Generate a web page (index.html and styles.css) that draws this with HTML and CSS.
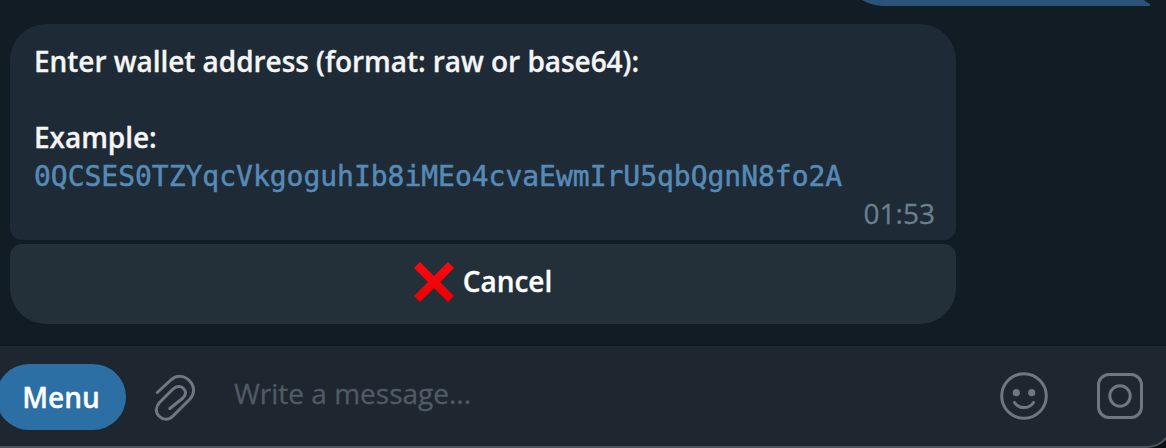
FILE: index.html
```html
<!DOCTYPE html>
<html lang="en">
<head>
<meta charset="utf-8">
<title>Chat</title>
<link rel="stylesheet" href="styles.css">
</head>
<body>
<div class="app">
  <main class="history">
    <svg class="outgoing" width="310" height="6" viewBox="0 0 310 6"><path d="M12 0H294Q296 2 300 4V6H32Q20 5 12 0Z" fill="#2b5379"/></svg>
    <article class="bubble">
      <p class="line"><span class="title">Enter wallet address (format: raw or base64):</span></p>
      <p class="line">&nbsp;</p>
      <p class="line"><span class="example">Example:</span></p>
      <p class="line code">0QCSES0TZYqcVkgoguhIb8iMEo4cvaEwmIrU5qbQgnN8fo2A</p>
      <time class="line time">01:53</time>
    </article>
    <button class="cancel">
      <svg width="40" height="40" viewBox="0 0 40 40"><defs><linearGradient id="red" x1="0" y1="0" x2="0" y2="1"><stop offset="0" stop-color="#ff0710"/><stop offset="1" stop-color="#e90000"/></linearGradient></defs><path d="M6 0L20 14L34 0L40 6L26 20L40 34L34 40L20 26L6 40L0 34L14 20L0 6Z" fill="url(#red)"/></svg>
      <span class="cancel-label">Cancel</span>
    </button>
  </main>
  <footer class="composer">
    <button class="menu"><span>Menu</span></button>
    <svg class="icon clip" width="44" height="50" viewBox="152 371 44 50"><path d="M157.300 392.500L171 379.800C176.500 375 184 375.300 189 380.300C194.800 386 195 393.500 190 399L173.500 415.500C169.500 420 163.500 420.500 159.500 416.500C155 412.500 155.500 407 159.500 402.500L172.500 389.500C176 386 181 385.300 183.500 388.500C186.500 391.500 185.800 395 183 398L169.800 408.500"/></svg>
    <span class="placeholder">Write a message...</span>
    <svg class="icon smile" width="50" height="50" viewBox="0 0 50 50"><circle cx="25" cy="25" r="22.300"/><circle class="eye" cx="17.300" cy="21.700" r="3.600"/><circle class="eye" cx="32.700" cy="21.700" r="3.600"/><path d="M15.500 31.500C20 38.300 30 38.300 34.500 31.500"/></svg>
    <svg class="icon record" width="48" height="48" viewBox="0 0 48 48"><rect x="2.500" y="2.500" width="43" height="43" rx="10.500"/><circle cx="24" cy="24" r="10.200"/></svg>
  </footer>
  <svg class="window-edge" width="1166" height="24" viewBox="0 0 1166 24"><path d="M1166 15C1162 20 1157 22.500 1148 22.500L1148 24H1166Z" fill="#0b0f15"/><path d="M0 23H1146Q1159 23 1167 13" fill="none" stroke="#4b535b" stroke-width="2"/></svg>
</div>
</body>
</html>
```
FILE: styles.css
```css
* { box-sizing: border-box; }
body { margin: 0; background: #121c25; }
.app {
  position: relative;
  display: flex;
  flex-direction: column;
  width: 1166px;
  height: 448px;
  overflow: hidden;
  background: #121c25;
  font: 28px/38px "Open Sans", "Noto Sans", sans-serif;
}
.history {
  display: flex;
  flex-direction: column;
  height: 346px;
  padding-left: 10px;
  border-bottom: 2px solid #0e1920;
}
.outgoing { display: block; flex: none; margin: 0 0 18px 840px; }
.bubble {
  display: flex;
  flex-direction: column;
  flex: none;
  width: 946px;
  height: 216px;
  padding: 18px 21px 0 24px;
  border-radius: 36px 36px 12px 12px;
  background: #1e2a35;
  color: #f5f5f5;
}
.line { height: 38px; margin: 0; white-space: pre; }
.title, .example { font-weight: 600; letter-spacing: -0.045px; -webkit-text-stroke: 0.3px; }
.code {
  padding-top: 2px;
  font-family: "DejaVu Sans Mono", monospace;
  letter-spacing: -0.02px;
  color: #568bb8;
  -webkit-text-stroke: 0.5px;
}
.time { align-self: flex-end; color: #6c7f8f; -webkit-text-stroke: 0.3px; }
button { border: 0; padding: 0; font: inherit; font-weight: 600; color: #fff; -webkit-text-stroke: 0.3px; }
.cancel {
  display: flex;
  align-items: center;
  justify-content: center;
  gap: 9px;
  flex: none;
  width: 946px;
  height: 80px;
  margin-top: 4px;
  padding-bottom: 4px;
  border-radius: 12px 12px 36px 36px;
  background: #23303a;
}
.cancel-label { padding-bottom: 2px; }
.composer {
  display: flex;
  align-items: flex-start;
  height: 102px;
  padding-top: 18px;
  background: #1e272f;
}
.menu {
  width: 130px;
  height: 66px;
  margin-left: -4px;
  border-radius: 33px;
  background: #2b6fa5;
}
.icon { flex: none; fill: none; stroke: #6d7883; stroke-width: 3; stroke-linecap: round; stroke-linejoin: round; }
.clip { margin: 7px 0 0 26px; }
.placeholder { flex: 1; margin: 10px 0 0 38px; color: #4f5b66; -webkit-text-stroke: 0.3px; }
.smile { margin-top: 7px; }
.record { margin: 8px 22px 0 47px; }
.eye { fill: #6d7883; stroke: none; }
.window-edge { position: absolute; left: 0; bottom: 0; }
```
